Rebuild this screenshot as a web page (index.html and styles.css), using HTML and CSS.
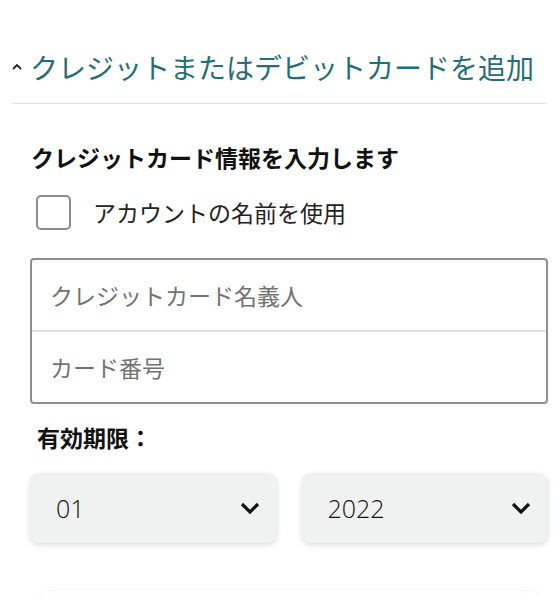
FILE: index.html
```html
<!DOCTYPE html>
<html lang="ja">
<head>
    <meta charset="UTF-8">
    <meta name="viewport" content="width=device-width, initial-scale=1.0">
    <title>クレジットまたはデビットカードを追加</title>
    <link rel="stylesheet" href="styles.css">
</head>
<body>
    <div class="panel">
        <div class="panel-header">
            <svg class="caret" width="10" height="7" viewBox="0 0 10 7">
                <path d="M1 6 L5 2 L9 6" fill="none" stroke="#222" stroke-width="1.8"/>
            </svg>
            <span class="panel-title">クレジットまたはデビットカードを追加</span>
        </div>
        <div class="divider"></div>

        <div class="card-form">
            <h3 class="form-heading">クレジットカード情報を入力します</h3>

            <label class="check-row">
                <span class="checkbox"></span>
                <span>アカウントの名前を使用</span>
            </label>

            <div class="input-group">
                <div class="input-row">クレジットカード名義人</div>
                <div class="input-row">カード番号</div>
            </div>

            <div class="expiry-label">有効期限：</div>

            <div class="expiry">
                <div class="select">
                    <span>01</span>
                    <svg width="20" height="13" viewBox="0 0 20 13">
                        <path d="M2 2 L10 10 L18 2" fill="none" stroke="#111" stroke-width="3.2"/>
                    </svg>
                </div>
                <div class="select">
                    <span>2022</span>
                    <svg width="20" height="13" viewBox="0 0 20 13">
                        <path d="M2 2 L10 10 L18 2" fill="none" stroke="#111" stroke-width="3.2"/>
                    </svg>
                </div>
            </div>

            <div class="next-button"></div>
        </div>
    </div>
</body>
</html>
```

FILE: styles.css
```css
body {
    margin: 0;
    background: #fff;
    font-family: "Noto Sans CJK JP", "Noto Sans", sans-serif;
    color: #111;
    overflow: hidden;
}
.panel {
    width: 560px;
    height: 600px;
    overflow: hidden;
}
.panel-header {
    display: flex;
    align-items: center;
    padding: 48px 12px 0 12px;
    height: 38px;
}
.caret {
    margin-right: 8px;
    margin-top: -2px;
}
.panel-title {
    font-size: 28px;
    line-height: 38px;
    color: #276d76;
    white-space: nowrap;
}
.divider {
    height: 1px;
    background: #e2e2e2;
    margin: 17px 13px 0 12px;
}
.card-form {
    padding: 0 12px 0 30px;
}
.form-heading {
    margin: 38px 0 0 1px;
    font-size: 23px;
    line-height: 30px;
    font-weight: bold;
}
.check-row {
    display: flex;
    align-items: center;
    margin-top: 22px;
    font-size: 23px;
    height: 36px;
    color: #222;
}
.checkbox {
    width: 31px;
    height: 31px;
    border: 2px solid #8c8c8c;
    border-radius: 5px;
    margin: 0 22px 0 6px;
}
.input-group {
    margin-top: 28px;
    border: 2px solid #8e8e8e;
    border-radius: 4px;
}
.input-row {
    height: 70px;
    display: flex;
    align-items: center;
    padding-left: 18px;
    font-size: 23px;
    color: #727272;
}
.input-row + .input-row {
    border-top: 2px solid #e0e0e0;
}
.expiry-label {
    margin-top: 18px;
    padding-left: 7px;
    font-size: 23px;
    line-height: 30px;
    font-weight: bold;
}
.expiry {
    display: grid;
    grid-template-columns: 1fr 1fr;
    gap: 25px;
    margin-top: 21px;
}
.select {
    height: 70px;
    background: #f0f2f2;
    border-radius: 9px;
    box-shadow: 0 2px 5px rgba(15, 17, 17, 0.15);
    display: flex;
    align-items: center;
    justify-content: space-between;
    padding: 0 17px 0 26px;
    font-family: "Open Sans", sans-serif;
    font-size: 25px;
    font-weight: 300;
    color: #111;
}
.next-button {
    margin: 48px 10px 0 10px;
    height: 8px;
    border-radius: 8px 8px 0 0;
    box-shadow: 0 -2px 6px rgba(180, 200, 190, 0.12);
}
```
